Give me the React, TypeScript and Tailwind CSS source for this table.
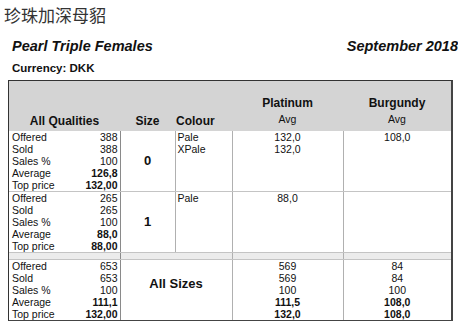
type Stat = [string, string];

const sizeRows = [
  {
    size: "0",
    stats: [
      ["Offered", "388"],
      ["Sold", "388"],
      ["Sales %", "100"],
      ["Average", "126,8"],
      ["Top price", "132,00"],
    ] as Stat[],
    colours: ["Pale", "XPale"],
    platinum: ["132,0", "132,0"],
    burgundy: ["108,0"],
  },
  {
    size: "1",
    stats: [
      ["Offered", "265"],
      ["Sold", "265"],
      ["Sales %", "100"],
      ["Average", "88,0"],
      ["Top price", "88,00"],
    ] as Stat[],
    colours: ["Pale"],
    platinum: ["88,0"],
    burgundy: [] as string[],
  },
];

const totals: Stat[] = [
  ["Offered", "653"],
  ["Sold", "653"],
  ["Sales %", "100"],
  ["Average", "111,1"],
  ["Top price", "132,00"],
];

const totalPlatinum = ["569", "569", "100", "111,5", "132,0"];
const totalBurgundy = ["84", "84", "100", "108,0", "108,0"];

function StatsCell({ stats }: { stats: Stat[] }) {
  return (
    <td className="align-top pl-[3px] pr-[2px] border-r border-b border-[#8a8a8a] border-b-[#c4c4c4]">
      {stats.map(([label, value], i) => (
        <div key={label} className="flex justify-between">
          <span>{label}</span>
          <span className={i > 2 ? "font-bold" : ""}>{value}</span>
        </div>
      ))}
    </td>
  );
}

function ValueCell({ values, last = false }: { values: string[]; last?: boolean }) {
  return (
    <td className={`align-top text-center border-b border-[#c4c4c4] ${last ? "" : "border-r border-r-[#b0b0b0]"}`}>
      {values.map((v, i) => (
        <div key={i}>{v}</div>
      ))}
    </td>
  );
}

export default function App() {
  return (
    <div className="w-[458px] h-[321px] overflow-hidden bg-white text-[#111] font-['Liberation_Sans',Arial,sans-serif]">
      <div className="pl-1 pt-[4px] text-[17px] leading-[22px] text-[#333] font-['Noto_Sans_CJK_SC',sans-serif]">
        珍珠加深母貂
      </div>
      <div className="flex w-[458px] justify-between pl-3 mt-[11px] text-[14.5px] font-bold italic leading-[18px]">
        <span>Pearl Triple Females</span>
        <span>September 2018</span>
      </div>
      <div className="pl-3 mt-[6px] text-[11.5px] font-bold leading-[14px]">Currency: DKK</div>

      {/* Table */}
      <div className="ml-2 mt-[5px] w-[445px] border-l border-t border-[#333] border-r-2 border-b-2 border-r-[#444] border-b-[#444]">
        <table className="w-full table-fixed border-collapse text-[10.5px] leading-[12px]">
          <colgroup>
            <col className="w-[111px]" />
            <col className="w-[55px]" />
            <col className="w-[57px]" />
            <col className="w-[111px]" />
            <col className="w-[108px]" />
          </colgroup>
          <thead>
            <tr className="h-[50px] bg-[#d4d4d4]">
              <th className="align-bottom pb-[3px] text-[12px] leading-[14px] font-bold text-center">All Qualities</th>
              <th className="align-bottom pb-[3px] text-[12px] leading-[14px] font-bold text-center">Size</th>
              <th className="align-bottom pb-[3px] pl-[1px] text-[12px] leading-[14px] font-bold text-left">Colour</th>
              <th className="align-bottom pb-[6px] text-center">
                <div className="text-[12px] leading-[14px] font-bold mb-[3px]">Platinum</div>
                <div className="font-normal">Avg</div>
              </th>
              <th className="align-bottom pb-[6px] text-center">
                <div className="text-[12px] leading-[14px] font-bold mb-[3px]">Burgundy</div>
                <div className="font-normal">Avg</div>
              </th>
            </tr>
          </thead>
          <tbody>
            {sizeRows.map((row) => (
              <tr key={row.size} className="h-[59px]">
                <StatsCell stats={row.stats} />
                <td className="align-middle text-center text-[13px] font-bold border-r border-b border-[#b0b0b0] border-b-[#c4c4c4]">
                  {row.size}
                </td>
                <td className="align-top pl-[2px] border-r border-b border-[#b0b0b0] border-b-[#c4c4c4]">
                  {row.colours.map((c) => (
                    <div key={c}>{c}</div>
                  ))}
                </td>
                <ValueCell values={row.platinum} />
                <ValueCell values={row.burgundy} last />
              </tr>
            ))}
            <tr className="h-[7px] bg-[#ececec]">
              <td className="border-r border-b border-[#8a8a8a] border-b-[#c4c4c4]" />
              <td colSpan={2} className="border-r border-b border-[#b0b0b0] border-b-[#c4c4c4]" />
              <td className="border-r border-b border-[#b0b0b0] border-b-[#c4c4c4]" />
              <td className="border-b border-[#c4c4c4]" />
            </tr>
            <tr className="h-[58px]">
              <td className="align-top pl-[3px] pr-[2px] border-r border-[#8a8a8a]">
                {totals.map(([label, value], i) => (
                  <div key={label} className="flex justify-between">
                    <span>{label}</span>
                    <span className={i > 2 ? "font-bold" : ""}>{value}</span>
                  </div>
                ))}
              </td>
              <td colSpan={2} className="align-middle pb-3 text-center text-[13px] font-bold border-r border-[#b0b0b0]">
                All Sizes
              </td>
              <td className="align-top text-center border-r border-[#b0b0b0]">
                {totalPlatinum.map((v, i) => (
                  <div key={i} className={i > 2 ? "font-bold" : ""}>
                    {v}
                  </div>
                ))}
              </td>
              <td className="align-top text-center">
                {totalBurgundy.map((v, i) => (
                  <div key={i} className={i > 2 ? "font-bold" : ""}>
                    {v}
                  </div>
                ))}
              </td>
            </tr>
          </tbody>
        </table>
      </div>
    </div>
  );
}
